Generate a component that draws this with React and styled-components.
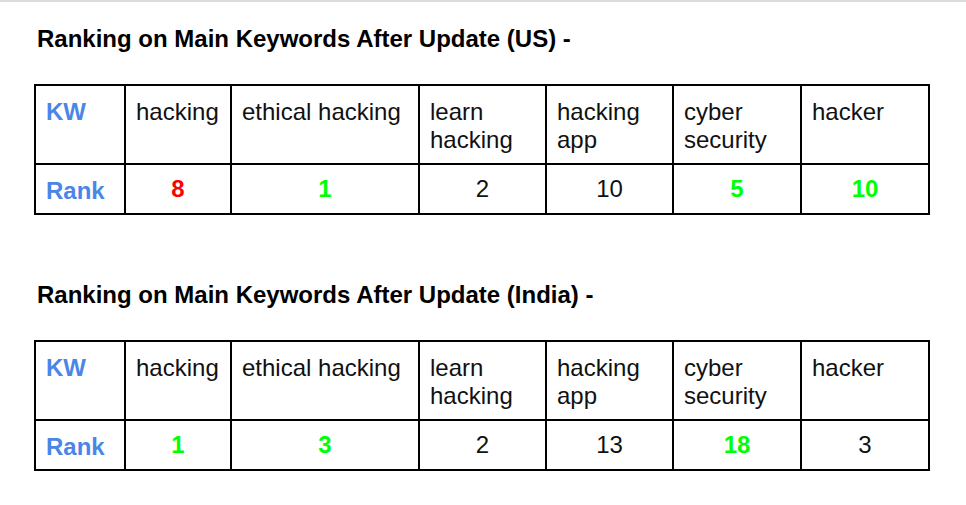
import React from "react"
import styled, { createGlobalStyle } from "styled-components"

const GlobalStyle = createGlobalStyle`
  html, body {
    margin: 0;
    padding: 0;
    background: #fff;
  }
  body {
    font-family: "Liberation Sans", Arial, sans-serif;
    color: #000;
  }
`

const Page = styled.div`
  width: 966px;
  min-height: 505px;
  box-sizing: border-box;
  border-top: 2px solid #dcdcdc;
  padding: 21px 0 0 34px;
`

const Section = styled.section`
  margin-bottom: ${(p) => p.gap || 0}px;
`

const Heading = styled.h2`
  margin: 0 0 33px 3px;
  padding-top: 2px;
  height: 28px;
  font-size: 24px;
  line-height: 28px;
  font-weight: bold;
  box-sizing: border-box;
`

const Table = styled.table`
  border-collapse: collapse;
  table-layout: fixed;
  width: 894px;
  font-size: 24px;
`

const Row = styled.tr`
  height: ${(p) => p.h}px;
`

const Cell = styled.td`
  border: 2px solid #000;
  padding: ${(p) => (p.center ? "8px 10px 8px" : "12px 10px 8px")};
  vertical-align: ${(p) => (p.center ? "middle" : "top")};
  text-align: ${(p) => (p.center ? "center" : "left")};
  line-height: 28px;
  color: ${(p) => p.color || "#111"};
  font-weight: ${(p) => (p.bold ? "bold" : "normal")};
`

const Label = styled(Cell)`
  color: #4a86e8;
  font-weight: bold;
`

const COLORS = { red: "#ff0000", green: "#00ff00" }

const widths = [90, 106, 188, 127, 127, 128, 128]

const keywords = [
  "hacking",
  "ethical hacking",
  ["learn", "hacking"],
  ["hacking", "app"],
  ["cyber", "security"],
  "hacker",
]

const RankTable = ({ ranks }) => (
  <Table>
    <colgroup>
      {widths.map((w, i) => (
        <col key={i} style={{ width: w }} />
      ))}
    </colgroup>
    <tbody>
      <Row h={79}>
        <Label>KW</Label>
        {keywords.map((k, i) => (
          <Cell key={i}>
            {Array.isArray(k) ? (
              <>
                {k[0]}
                <br />
                {k[1]}
              </>
            ) : (
              k
            )}
          </Cell>
        ))}
      </Row>
      <Row h={48}>
        <Label>Rank</Label>
        {ranks.map((r, i) => (
          <Cell key={i} center bold={!!r.c} color={COLORS[r.c]}>
            {r.v}
          </Cell>
        ))}
      </Row>
    </tbody>
  </Table>
)

const us = [
  { v: 8, c: "red" },
  { v: 1, c: "green" },
  { v: 2 },
  { v: 10 },
  { v: 5, c: "green" },
  { v: 10, c: "green" },
]

const india = [
  { v: 1, c: "green" },
  { v: 3, c: "green" },
  { v: 2 },
  { v: 13 },
  { v: 18, c: "green" },
  { v: 3 },
]

export default function App() {
  return (
    <>
      <GlobalStyle />
      <Page>
        <Section gap={64}>
          <Heading>Ranking on Main Keywords After Update (US) -</Heading>
          <RankTable ranks={us} />
        </Section>
        <Section>
          <Heading>Ranking on Main Keywords After Update (India) -</Heading>
          <RankTable ranks={india} />
        </Section>
      </Page>
    </>
  )
}
